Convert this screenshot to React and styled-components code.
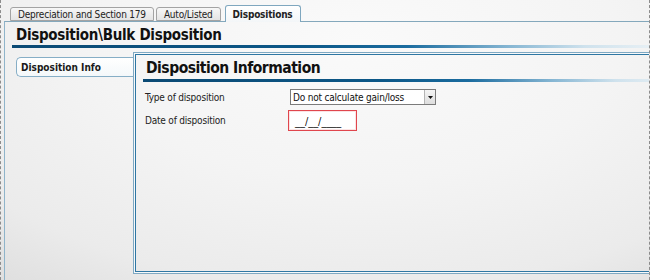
import React from "react";
import styled, { createGlobalStyle } from "styled-components";

const GlobalStyle = createGlobalStyle`
  html, body {
    margin: 0;
    padding: 0;
    background: #f2f2f2;
  }
  body {
    font-family: "DejaVu Sans Condensed", "DejaVu Sans", sans-serif;
    color: #1e1e1e;
  }
`;

export default function App() {
  return (
    <>
      <GlobalStyle />
      <Frame>
        <TabStrip>
          <Tab>Depreciation and Section 179</Tab>
          <Tab>Auto/Listed</Tab>
          <Tab $active>Dispositions</Tab>
        </TabStrip>
        <Page>
          <PageTitle>Disposition\Bulk Disposition</PageTitle>
          <Rule $inset={7} />
          <Body>
            <SideNav>
              <SideItem>Disposition Info</SideItem>
            </SideNav>
            <Panel>
              <PanelTitle>Disposition Information</PanelTitle>
              <Rule $inset={9} />
              <Form>
                <Row>
                  <Label>Type of disposition</Label>
                  <Select>
                    <span>Do not calculate gain/loss</span>
                    <SelectButton>
                      <svg width="5" height="3" viewBox="0 0 5 3">
                        <path d="M0 0h5L2.5 3z" fill="#111" />
                      </svg>
                    </SelectButton>
                  </Select>
                </Row>
                <Row>
                  <Label>Date of disposition</Label>
                  <DateInput>__/__/____</DateInput>
                </Row>
              </Form>
            </Panel>
          </Body>
        </Page>
      </Frame>
    </>
  );
}

const Frame = styled.div`
  box-sizing: border-box;
  width: 650px;
  height: 280px;
  display: flex;
  flex-direction: column;
  padding-left: 3px;
  border-left: 1px dashed #8c8c8c;
  border-right: 1px dashed #8c8c8c;
  overflow: hidden;
  background: radial-gradient(ellipse 90% 110% at 55% 15%, #fafafa 0%, #f4f4f4 45%, #ebebeb 80%, #dedede 100%);
`;

const TabStrip = styled.div`
  height: 21px;
  display: flex;
  align-items: flex-end;
  gap: 2px;
  padding-left: 6px;
  position: relative;
  z-index: 1;
`;

const Tab = styled.div`
  box-sizing: border-box;
  height: ${(p) => (p.$active ? "17px" : "14px")};
  margin-bottom: ${(p) => (p.$active ? "-1px" : "0")};
  margin-left: ${(p) => (p.$active ? "2px" : "0")};
  padding: ${(p) => (p.$active ? "1px 7px 0" : "0 7px")};
  display: flex;
  align-items: center;
  font-size: 10px;
  letter-spacing: -0.2px;
  font-weight: ${(p) => (p.$active ? "bold" : "normal")};
  color: #222;
  border: 1px solid ${(p) => (p.$active ? "#7fa7bf" : "#a3a3a3")};
  border-bottom: ${(p) => (p.$active ? "none" : "1px solid #a3a3a3")};
  border-radius: 3px 3px 0 0;
  background: ${(p) =>
    p.$active
      ? "linear-gradient(#ffffff, #f3f6f8)"
      : "linear-gradient(#f7f7f7, #e4e4e4)"};
  white-space: nowrap;
`;

const Page = styled.div`
  flex: 1;
  display: flex;
  flex-direction: column;
  min-height: 0;
  border-top: 1px solid #84a8bc;
  border-left: 1px solid #8fb4ca;
`;

const PageTitle = styled.h1`
  margin: 0;
  height: 23px;
  padding-left: 11px;
  display: flex;
  align-items: flex-end;
  font-size: 15px;
  letter-spacing: -0.3px;
  font-weight: bold;
  color: #111;
  line-height: 20px;
  white-space: nowrap;
`;

const Rule = styled.div`
  height: 3px;
  flex-shrink: 0;
  margin-left: ${(p) => p.$inset}px;
  background: linear-gradient(
    90deg,
    #0b4a74 0%,
    #0c5787 45%,
    #1b6c9f 62%,
    #86b6d3 78%,
    #cfe2ed 90%,
    #e6eff4 100%
  );
`;

const Body = styled.div`
  flex: 1;
  display: flex;
  padding: 4px 0 6px;
  min-height: 0;
`;

const SideNav = styled.div`
  width: 128px;
  flex-shrink: 0;
  padding-top: 5px;
  padding-left: 11px;
  box-sizing: border-box;
`;

const SideItem = styled.div`
  box-sizing: border-box;
  height: 20px;
  margin-right: -1px;
  padding-left: 4px;
  display: flex;
  align-items: center;
  font-size: 10px;
  font-weight: bold;
  color: #1a1a1a;
  border: 1px solid #86aec6;
  border-right: none;
  border-radius: 5px 0 0 5px;
  background: linear-gradient(#ffffff, #f4f8fa);
  white-space: nowrap;
`;

const Panel = styled.div`
  flex: 1;
  margin-right: -20px;
  display: flex;
  flex-direction: column;
  border: 1px solid #7fa9c3;
  box-shadow: inset 0 0 0 1px #f7f9fa, inset 0 0 0 2px #2f77a3;
`;

const PanelTitle = styled.h2`
  margin: 0;
  height: 26px;
  padding-left: 12px;
  display: flex;
  align-items: flex-end;
  font-size: 15.5px;
  letter-spacing: -0.5px;
  font-weight: bold;
  color: #111;
  line-height: 22px;
  white-space: nowrap;
`;

const Form = styled.div`
  display: flex;
  flex-direction: column;
  gap: 5px;
  padding: 7px 0 0 11px;
`;

const Row = styled.div`
  display: flex;
  align-items: center;
  font-size: 10px;
  letter-spacing: -0.2px;
`;

const Label = styled.div`
  width: 145px;
  color: #222;
`;

const Select = styled.div`
  box-sizing: border-box;
  width: 146px;
  height: 16px;
  display: flex;
  align-items: center;
  justify-content: space-between;
  padding-left: 2px;
  border: 1px solid #7b7b7b;
  background: #fff;
  color: #111;
  white-space: nowrap;
`;

const SelectButton = styled.div`
  width: 10px;
  height: 100%;
  display: flex;
  align-items: center;
  justify-content: center;
  border-left: 1px solid #b5b5b5;
  background: linear-gradient(#f4f4f4, #dedede);
`;

const DateInput = styled.div`
  box-sizing: border-box;
  width: 69px;
  height: 21px;
  margin-left: -2px;
  padding: 2px 0 0 6px;
  display: flex;
  align-items: center;
  font-size: 11px;
  letter-spacing: 0;
  border: 1px solid #e0464d;
  box-shadow: inset 0 0 0 1px #fbe3e4;
  background: #fff;
  color: #111;
  white-space: nowrap;
`;
